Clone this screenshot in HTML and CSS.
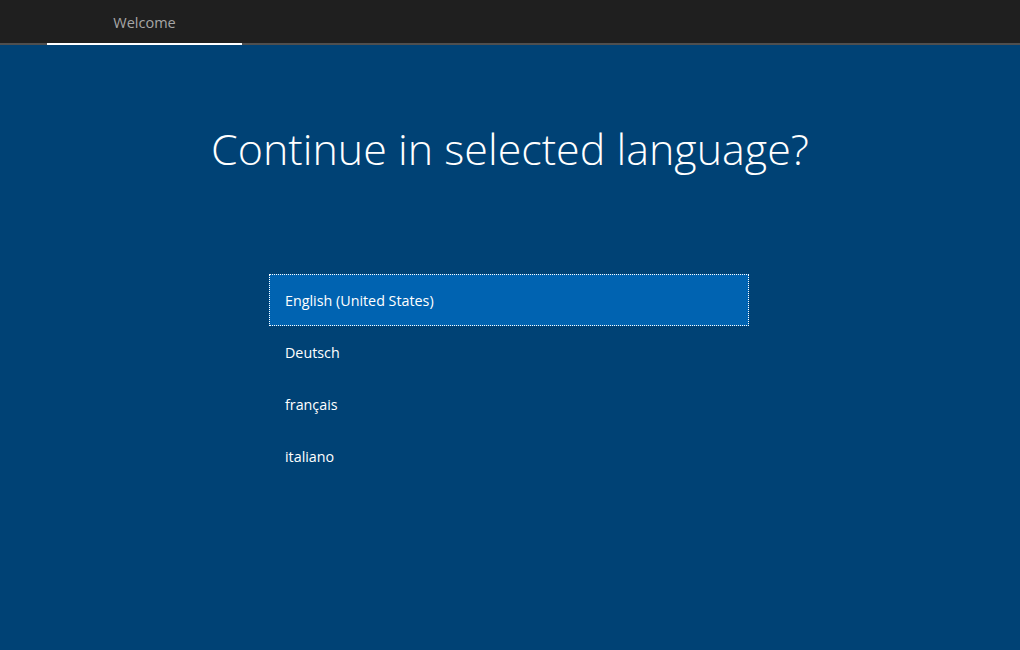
FILE: index.html
```html
<!DOCTYPE html>
<html>
<head>
<meta charset="utf-8">
<link rel="stylesheet" href="styles.css">
</head>
<body>
<header class="topbar">
  <div class="tab">Welcome</div>
</header>
<main class="content">
  <h1 class="title">Continue in selected language?</h1>
  <ul class="langs">
    <li class="lang selected">English (United States)</li>
    <li class="lang">Deutsch</li>
    <li class="lang">français</li>
    <li class="lang">italiano</li>
  </ul>
</main>
</body>
</html>
```
FILE: styles.css
```css
html, body {
  margin: 0;
  padding: 0;
  height: 100%;
}
body {
  background: #004275;
  font-family: "Open Sans", "Noto Sans", sans-serif;
  display: flex;
  flex-direction: column;
  overflow: hidden;
}
.topbar {
  background: #1f1f1f;
  height: 43px;
  border-bottom: 2px solid #4f4f4f;
  display: flex;
  padding-left: 47px;
  flex-shrink: 0;
}
.tab {
  width: 195px;
  height: 45px;
  border-bottom: 2px solid #ffffff;
  margin-bottom: -2px;
  color: #a6a6a6;
  font-size: 14.5px;
  display: flex;
  align-items: center;
  justify-content: center;
  padding-top: 1px;
  box-sizing: border-box;
}
.content {
  flex: 1;
  display: flex;
  flex-direction: column;
  align-items: center;
}
.title {
  margin: 74px 0 0 0;
  color: #ffffff;
  font-weight: 300;
  font-size: 43px;
  line-height: 60px;
  letter-spacing: 0;
}
.langs {
  list-style: none;
  margin: 95px 0 0 -2px;
  padding: 0;
  width: 480px;
}
.lang {
  height: 52px;
  box-sizing: border-box;
  border: 1px solid transparent;
  padding-left: 15px;
  display: flex;
  align-items: center;
  color: #ffffff;
  font-size: 14.3px;
}
.lang.selected {
  background: #0063b1;
  border: 1px dotted #ffffff;
}
```
